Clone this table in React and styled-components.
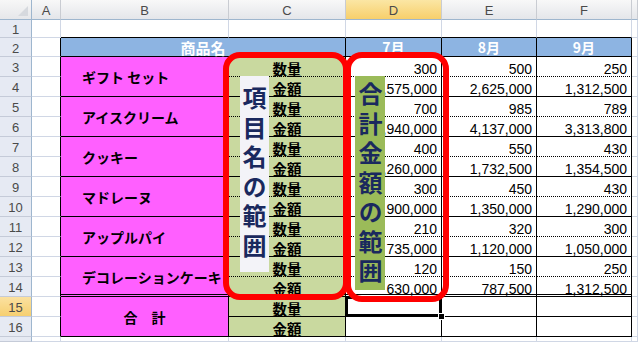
import React from "react";
import styled, { createGlobalStyle, css } from "styled-components";

const GlobalStyle = createGlobalStyle`
  html, body {
    margin: 0;
    padding: 0;
    background: #fff;
    overflow: hidden;
  }
`;

const JP = `"Noto Sans CJK JP", "Liberation Sans", sans-serif`;
const NUM = `"Liberation Sans", Arial, sans-serif`;
const GRID = "#D0D7E5";

const products = [
  { name: "ギフト セット", qty: ["300", "500", "250"], amt: ["1,575,000", "2,625,000", "1,312,500"] },
  { name: "アイスクリーム", qty: ["700", "985", "789"], amt: ["2,940,000", "4,137,000", "3,313,800"] },
  { name: "クッキー", qty: ["400", "550", "430"], amt: ["1,260,000", "1,732,500", "1,354,500"] },
  { name: "マドレーヌ", qty: ["300", "450", "430"], amt: ["900,000", "1,350,000", "1,290,000"] },
  { name: "アップルパイ", qty: ["210", "320", "300"], amt: ["735,000", "1,120,000", "1,050,000"] },
  { name: "デコレーションケーキ", qty: ["120", "150", "250"], amt: ["630,000", "787,500", "1,312,500"] },
];

const letters = ["A", "B", "C", "D", "E", "F", ""];

// bottom edge of a table cell: dotted / solid / double (double drawn without eating layout space)
const edge = (kind, bg) => css`
  border-bottom: 1px ${kind === "dotted" ? "dotted" : "solid"} #000;
  ${kind === "double" &&
  css`
    box-shadow: inset 0 -1px 0 ${bg}, inset 0 -2px 0 #000;
  `}
`;

const Sheet = styled.div`
  position: relative;
  width: 638px;
  height: 342px;
  display: grid;
  grid-template-columns: 32px 29px 168px 117px 96px 95px 95px 6px;
  grid-template-rows: 20px 18px 19px repeat(14, 20px) 5px;
  overflow: hidden;
  font-family: ${JP};

  & > * {
    box-sizing: border-box;
    min-width: 0;
  }
`;

const Corner = styled.div`
  position: relative;
  background: linear-gradient(#f7f7f7, #e6e7ea);
  border-right: 1px solid #9eb6ce;
  border-bottom: 1px solid #9eb6ce;

  &::after {
    content: "";
    position: absolute;
    right: 3px;
    bottom: 3px;
    border-left: 10px solid transparent;
    border-bottom: 10px solid #d6d9de;
  }
`;

const ColHead = styled.div`
  display: flex;
  justify-content: center;
  padding-top: 3px;
  font-family: ${NUM};
  font-size: 13px;
  color: #4a4a4a;
  background: ${(p) =>
    p.$active
      ? "linear-gradient(#fbe6a4, #f7cf6b)"
      : "linear-gradient(#f8f8f8, #e4e6ea)"};
  border-right: 1px solid #c9ccd2;
  border-bottom: 1px solid #9eb6ce;
`;

const RowHead = styled.div`
  display: flex;
  align-items: center;
  justify-content: center;
  padding-top: 2px;
  font-family: ${NUM};
  font-size: 13px;
  color: #4a4a4a;
  background: ${(p) => (p.$active ? "linear-gradient(#fbe1a0, #f6cf70)" : "#e6eaf3")};
  border-right: 1px solid #9eb6ce;
  border-bottom: 1px solid #c5cbd8;
`;

const Blank = styled.div`
  background: #fff;
  border-right: 1px solid ${(p) => p.$right || GRID};
  border-bottom: 1px solid ${(p) => p.$bottom || GRID};
`;

const HeadCell = styled.div`
  grid-column: span ${(p) => p.$span || 1};
  display: flex;
  align-items: center;
  justify-content: center;
  background: #8db4e2;
  color: #fff;
  font-weight: 700;
  font-size: ${(p) => (p.$span ? "15px" : "14px")};
  border-right: 1px solid #000;
  border-bottom: 1px solid #000;
`;

const NameCell = styled.div`
  grid-row: span 2;
  display: flex;
  align-items: center;
  justify-content: ${(p) => (p.$center ? "center" : "flex-start")};
  padding-left: ${(p) => (p.$center ? "0" : "21px")};
  background: #ff5fff;
  color: #000;
  font-weight: 700;
  font-size: 14px;
  white-space: nowrap;
  border-right: 1px solid #000;
  ${(p) => edge(p.$line, "#ff5fff")}
`;

const ItemCell = styled.div`
  display: flex;
  align-items: flex-end;
  justify-content: center;
  line-height: 1;
  background: #c9d99f;
  color: #000;
  font-weight: 700;
  font-size: 14.5px;
  border-right: 1px solid #000;
  ${(p) => edge(p.$line, "#c9d99f")}
`;

const NumCell = styled.div`
  position: relative;
  display: flex;
  align-items: flex-end;
  justify-content: flex-end;
  padding-right: 4px;
  line-height: 1;
  background: #fff;
  font-family: ${NUM};
  font-size: 14px;
  color: #000;
  border-right: 1px solid #000;
  ${(p) => edge(p.$line, "#fff")}

  ${(p) =>
    p.$selected &&
    css`
      box-shadow: inset 0 0 0 2px #000;
      &::after {
        content: "";
        position: absolute;
        right: -4px;
        bottom: -4px;
        width: 5px;
        height: 5px;
        background: #000;
        border: 1px solid #fff;
        z-index: 2;
      }
    `}
`;

const Frame = styled.div`
  position: absolute;
  box-sizing: border-box;
  left: ${(p) => p.$x}px;
  top: ${(p) => p.$y}px;
  width: ${(p) => p.$w}px;
  height: ${(p) => p.$h}px;
  border: 6px solid #ff0000;
  border-radius: 17px;
  z-index: 3;
`;

const Label = styled.div`
  position: absolute;
  box-sizing: border-box;
  left: ${(p) => p.$x}px;
  top: ${(p) => p.$y}px;
  width: ${(p) => p.$w}px;
  height: ${(p) => p.$h}px;
  padding-top: ${(p) => p.$pad}px;
  background: ${(p) => p.$bg};
  writing-mode: vertical-rl;
  text-orientation: upright;
  line-height: ${(p) => p.$w}px;
  letter-spacing: 5.5px;
  font-family: ${JP};
  font-weight: 700;
  font-size: 24px;
  color: #1a295e;
  z-index: 4;
`;

function App() {
  const cells = [];

  cells.push(<Corner key="corner" />);
  letters.forEach((c, i) =>
    cells.push(
      <ColHead key={"h" + i} $active={c === "D"}>
        {c}
      </ColHead>
    )
  );

  cells.push(<RowHead key="r1">1</RowHead>);
  letters.forEach((c, i) =>
    cells.push(<Blank key={"1-" + i} $bottom={i >= 1 && i <= 5 ? "#000" : undefined} />)
  );

  cells.push(<RowHead key="r2">2</RowHead>);
  cells.push(<Blank key="2a" $right="#000" />);
  cells.push(
    <HeadCell key="2b" $span={2}>
      商品名
    </HeadCell>
  );
  ["7月", "8月", "9月"].forEach((m) => cells.push(<HeadCell key={m}>{m}</HeadCell>));
  cells.push(<Blank key="2g" />);

  products.forEach((p, idx) => {
    const r = 3 + idx * 2;
    const end = idx === products.length - 1 ? "double" : "solid";

    cells.push(<RowHead key={"r" + r}>{r}</RowHead>);
    cells.push(<Blank key={r + "a"} $right="#000" />);
    cells.push(
      <NameCell key={r + "b"} $line={end}>
        {p.name}
      </NameCell>
    );
    cells.push(
      <ItemCell key={r + "c"} $line="dotted">
        数量
      </ItemCell>
    );
    p.qty.forEach((v, i) =>
      cells.push(
        <NumCell key={r + "q" + i} $line="dotted">
          {v}
        </NumCell>
      )
    );
    cells.push(<Blank key={r + "g"} />);

    cells.push(<RowHead key={"r" + (r + 1)}>{r + 1}</RowHead>);
    cells.push(<Blank key={r + 1 + "a"} $right="#000" />);
    cells.push(
      <ItemCell key={r + 1 + "c"} $line={end}>
        金額
      </ItemCell>
    );
    p.amt.forEach((v, i) =>
      cells.push(
        <NumCell key={r + 1 + "m" + i} $line={end}>
          {v}
        </NumCell>
      )
    );
    cells.push(<Blank key={r + 1 + "g"} />);
  });

  cells.push(
    <RowHead key="r15" $active>
      15
    </RowHead>
  );
  cells.push(<Blank key="15a" $right="#000" />);
  cells.push(
    <NameCell key="15b" $line="solid" $center>
      合　計
    </NameCell>
  );
  cells.push(
    <ItemCell key="15c" $line="solid">
      数量
    </ItemCell>
  );
  [0, 1, 2].forEach((i) => cells.push(<NumCell key={"15n" + i} $line="solid" $selected={i === 0} />));
  cells.push(<Blank key="15g" />);

  cells.push(<RowHead key="r16">16</RowHead>);
  cells.push(<Blank key="16a" $right="#000" />);
  cells.push(
    <ItemCell key="16c" $line="solid">
      金額
    </ItemCell>
  );
  [0, 1, 2].forEach((i) => cells.push(<NumCell key={"16n" + i} $line="solid" />));
  cells.push(<Blank key="16g" />);

  cells.push(<RowHead key="r17" />);
  letters.forEach((c, i) => cells.push(<Blank key={"17-" + i} />));

  return (
    <>
      <GlobalStyle />
      <Sheet>
        {cells}
        <Frame $x={223} $y={52} $w={126} $h={248} />
        <Frame $x={345} $y={52} $w={104} $h={250} />
        <Label $x={240} $y={76} $w={29} $h={196} $pad={10} $bg="#f3f3f8">
          項目名の範囲
        </Label>
        <Label $x={355} $y={76} $w={30} $h={214} $pad={6} $bg="#9bbb59">
          合計金額の範囲
        </Label>
      </Sheet>
    </>
  );
}

export default App;
